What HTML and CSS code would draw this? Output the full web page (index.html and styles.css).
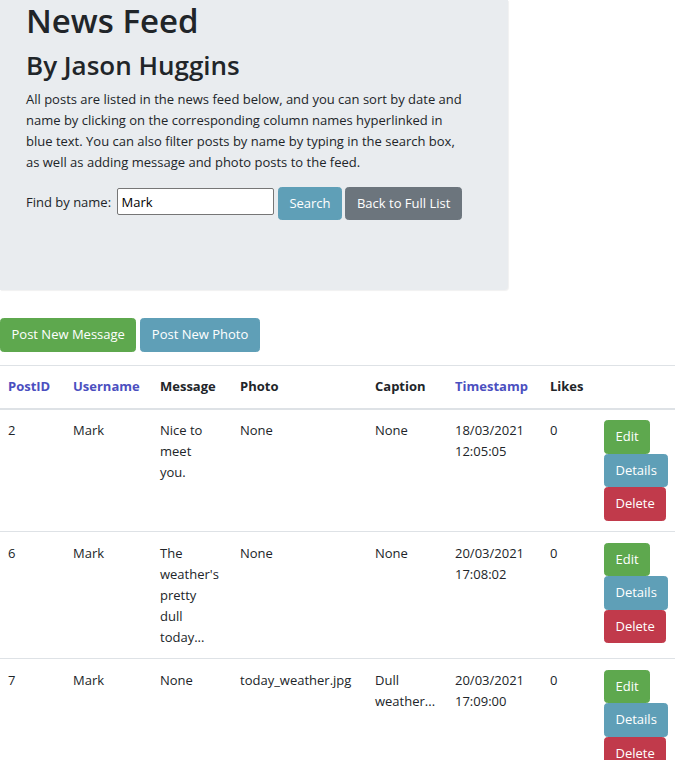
FILE: index.html
```html
<!DOCTYPE html>
<html lang="en">
<head>
<meta charset="utf-8">
<title>News Feed</title>
<link rel="stylesheet" href="styles.css">
</head>
<body>
<div class="jumbotron">
  <h1>News Feed</h1>
  <h2>By Jason Huggins</h2>
  <p>All posts are listed in the news feed below, and you can sort by date and name by clicking on the corresponding column names hyperlinked in blue text. You can also filter posts by name by typing in the search box, as well as adding message and photo posts to the feed.</p>
  <form class="search-form">
    <label for="q">Find by name:</label> <input id="q" type="text" value="Mark"> <button type="button" class="btn btn-info">Search</button> <button type="button" class="btn btn-secondary">Back to Full List</button>
  </form>
</div>
<div class="actions">
  <a class="btn btn-success" href="#">Post New Message</a>
  <a class="btn btn-info" href="#">Post New Photo</a>
</div>
<table class="feed">
  <colgroup>
    <col class="c-id"><col class="c-user"><col class="c-msg"><col class="c-photo"><col class="c-cap"><col class="c-time"><col class="c-likes"><col class="c-act">
  </colgroup>
  <thead>
    <tr>
      <th><a href="#">PostID</a></th>
      <th><a href="#">Username</a></th>
      <th>Message</th>
      <th>Photo</th>
      <th>Caption</th>
      <th><a href="#">Timestamp</a></th>
      <th>Likes</th>
      <th></th>
    </tr>
  </thead>
  <tbody>
    <tr>
      <td>2</td>
      <td>Mark</td>
      <td>Nice to meet you.</td>
      <td>None</td>
      <td>None</td>
      <td>18/03/2021 12:05:05</td>
      <td>0</td>
      <td><a class="btn btn-success" href="#">Edit</a> <a class="btn btn-info" href="#">Details</a> <a class="btn btn-danger" href="#">Delete</a></td>
    </tr>
    <tr>
      <td>6</td>
      <td>Mark</td>
      <td>The weather's pretty dull today...</td>
      <td>None</td>
      <td>None</td>
      <td>20/03/2021 17:08:02</td>
      <td>0</td>
      <td><a class="btn btn-success" href="#">Edit</a> <a class="btn btn-info" href="#">Details</a> <a class="btn btn-danger" href="#">Delete</a></td>
    </tr>
    <tr>
      <td>7</td>
      <td>Mark</td>
      <td>None</td>
      <td>today_weather.jpg</td>
      <td>Dull weather...</td>
      <td>20/03/2021 17:09:00</td>
      <td>0</td>
      <td><a class="btn btn-success" href="#">Edit</a> <a class="btn btn-info" href="#">Details</a> <a class="btn btn-danger" href="#">Delete</a></td>
    </tr>
  </tbody>
</table>
</body>
</html>
```
FILE: styles.css
```css
html, body {
  overflow-x: hidden;
}
body {
  margin: 0;
  font-family: "Open Sans", "Noto Sans", "Liberation Sans", sans-serif;
  font-size: 13px;
  line-height: 21px;
  color: #212529;
  background: #fff;
}

.jumbotron {
  width: 508px;
  box-sizing: border-box;
  padding: 0 26px 56px;
  margin-bottom: 28px;
  background: #e9ecef;
  border-bottom-right-radius: 4px;
  box-shadow: 1px 1px 1px rgba(0, 0, 0, 0.06);
}
.jumbotron h1 {
  margin: 0 0 7px;
  font-size: 33px;
  font-weight: 600;
  line-height: 42px;
}
.jumbotron h2 {
  margin: 0 0 6px;
  font-size: 26px;
  font-weight: 600;
  line-height: 33.6px;
}
.jumbotron p {
  max-width: 442px;
  margin: 0 0 14px;
}
.search-form {
  margin: 0 0 14px;
}
.search-form label {
  margin-right: 3px;
}
.search-form input {
  font: inherit;
  width: 157px;
  height: 27px;
  box-sizing: border-box;
  padding: 1px 3px;
  border: 1px solid #767676;
  border-radius: 2px;
  background: #fff;
  color: #000;
}

.btn {
  display: inline-block;
  font: inherit;
  line-height: 21px;
  padding: 5.25px 10.5px;
  border: 1px solid transparent;
  border-radius: 3.5px;
  color: #fff;
  text-decoration: none;
  cursor: pointer;
  vertical-align: middle;
}
.btn-success { background: #5ea84e; border-color: #5ea84e; }
.btn-info { background: #5f9fb7; border-color: #5f9fb7; }
.btn-secondary { background: #6c757d; border-color: #6c757d; }
.btn-danger { background: #c13a4b; border-color: #c13a4b; }

.actions {
  display: flex;
  gap: 4px;
  margin-bottom: 13px;
}

.feed {
  width: 675px;
  table-layout: fixed;
  border-collapse: collapse;
}
.c-id { width: 65px; }
.c-user { width: 87px; }
.c-msg { width: 80px; }
.c-photo { width: 135px; }
.c-cap { width: 80px; }
.c-time { width: 95px; }
.c-likes { width: 54px; }
.c-act { width: 79px; }

.feed th,
.feed td {
  padding: 10.5px 14px 10.5px 8px;
  border-top: 1px solid #dee2e6;
  text-align: left;
  vertical-align: top;
}
.feed th {
  font-weight: 700;
  vertical-align: bottom;
  border-bottom: 2px solid #dee2e6;
  white-space: nowrap;
}
.feed th a {
  color: #4b4fc0;
  text-decoration: none;
}
.feed td .btn {
  vertical-align: baseline;
}
```
